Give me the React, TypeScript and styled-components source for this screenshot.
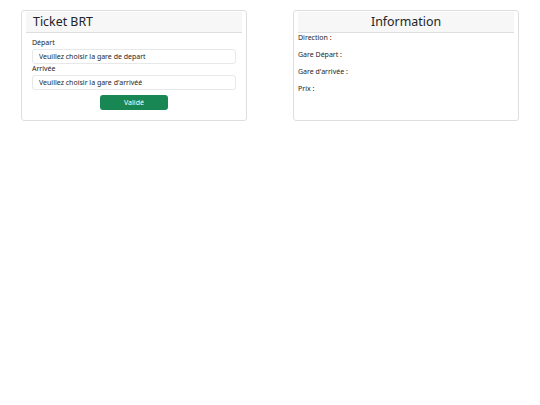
import React from "react";
import styled, { createGlobalStyle } from "styled-components";

const GlobalStyle = createGlobalStyle`
	body {
		margin: 0;
		font-family: "Noto Sans", "Open Sans", sans-serif;
		color: #212529;
		background: #fff;
	}
`;

const Page = styled.div`
	display: grid;
	grid-template-columns: 226px 226px;
	column-gap: 46px;
	padding: 10px 21px;
`;

const Card = styled.div`
	height: 111px;
	box-sizing: border-box;
	border: 1px solid #dcdfe2;
	border-radius: 3px;
	padding: 1px 4px;
`;

const CardHeader = styled.div<{ $center?: boolean }>`
	background: #f7f7f7;
	border-bottom: 1px solid #dcdfe2;
	height: 20px;
	padding: 0 7px;
	font-size: 12.4px;
	line-height: 19px;
	text-align: ${(p) => (p.$center ? "center" : "left")};
`;

const Form = styled.form`
	display: flex;
	flex-direction: column;
	padding: 5px 6px 0;
`;

const Label = styled.label`
	font-size: 7px;
	line-height: 10px;
	margin-bottom: 1px;
`;

const Select = styled.div`
	height: 15px;
	box-sizing: border-box;
	border: 1px solid #e6e8ea;
	border-radius: 3px;
	padding: 0 6px;
	font-size: 7px;
	line-height: 13px;
`;

const Button = styled.button`
	align-self: center;
	margin-top: 5px;
	width: 68px;
	height: 15px;
	border: none;
	border-radius: 3px;
	background: #198754;
	color: #fff;
	font-family: inherit;
	font-size: 7px;
	padding: 0;
`;

const InfoList = styled.div`
	display: flex;
	flex-direction: column;
	gap: 7px;
`;

const InfoRow = styled.div`
	font-size: 7px;
	line-height: 10px;
`;

const App = () => {
	return (
		<>
			<GlobalStyle />
			<Page>
				<Card>
					<CardHeader>Ticket BRT</CardHeader>
					<Form onSubmit={(e) => e.preventDefault()}>
						<Label>Départ</Label>
						<Select>Veuillez choisir la gare de depart</Select>
						<Label>Arrivée</Label>
						<Select>Veuillez choisir la gare d'arrivéé</Select>
						<Button type="submit">Validé</Button>
					</Form>
				</Card>
				<Card>
					<CardHeader $center>Information</CardHeader>
					<InfoList>
						<InfoRow>Direction :</InfoRow>
						<InfoRow>Gare Départ :</InfoRow>
						<InfoRow>Gare d'arrivée :</InfoRow>
						<InfoRow>Prix :</InfoRow>
					</InfoList>
				</Card>
			</Page>
		</>
	);
};

export default App;
